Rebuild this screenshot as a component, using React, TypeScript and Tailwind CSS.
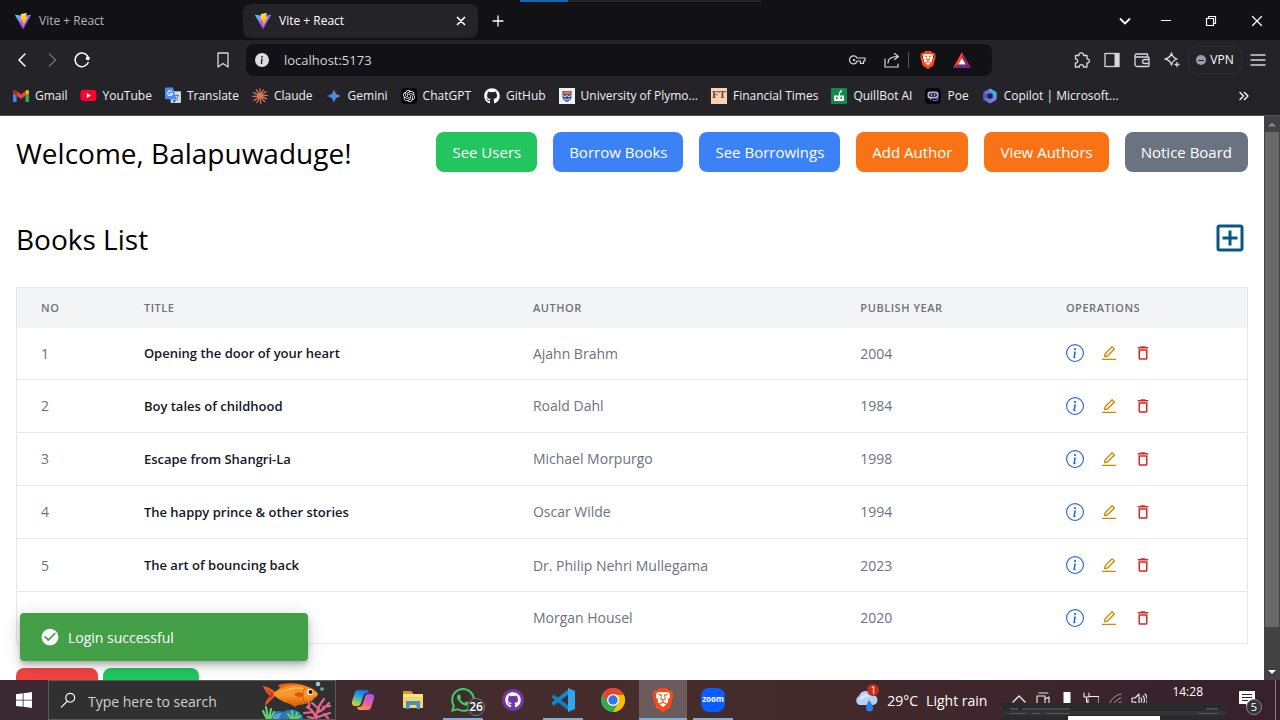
import React from "react";
import { AiOutlineEdit } from "react-icons/ai";
import { BsInfoCircle, BsInfoCircleFill } from "react-icons/bs";
import { FaGithub, FaYoutube } from "react-icons/fa";
import { MdOutlineAddBox, MdOutlineDelete } from "react-icons/md";
import { SiBrave, SiOpenai, SiWhatsapp } from "react-icons/si";

type Kids = { children?: React.ReactNode };

function ViteLogo() {
  return (
    <svg viewBox="0 0 256 257" className="size-4 shrink-0" aria-hidden="true">
      <defs>
        <linearGradient id="viteA" x1="0" x2=".58" y1=".08" y2=".79">
          <stop offset="0" stopColor="#41d1ff" />
          <stop offset="1" stopColor="#bd34fe" />
        </linearGradient>
        <linearGradient id="viteB" x1=".43" x2=".5" y1=".02" y2=".9">
          <stop offset="0" stopColor="#ffea83" />
          <stop offset=".08" stopColor="#ffdd35" />
          <stop offset="1" stopColor="#ffa800" />
        </linearGradient>
      </defs>
      <path fill="url(#viteA)" d="M255.153 37.938L134.897 252.976c-2.483 4.44-8.862 4.466-11.382.048L.875 37.958c-2.746-4.814 1.371-10.646 6.827-9.67l120.385 21.517a6.537 6.537 0 0 0 2.322-.004l117.867-21.483c5.438-.991 9.574 4.796 6.877 9.62Z" />
      <path fill="url(#viteB)" d="M185.432.063L96.44 17.501a3.268 3.268 0 0 0-2.634 3.014l-5.474 92.456a3.268 3.268 0 0 0 3.997 3.378l24.777-5.718c2.318-.535 4.413 1.507 3.936 3.838l-7.361 36.047c-.495 2.426 1.782 4.5 4.151 3.78l15.304-4.649c2.372-.72 4.652 1.36 4.15 3.788l-11.698 56.621c-.732 3.542 3.979 5.473 5.943 2.437l1.313-2.028l72.516-144.72c1.215-2.423-.88-5.186-3.54-4.672l-25.505 4.922c-2.396.462-4.435-1.77-3.759-4.114l16.646-57.705c.677-2.35-1.37-4.583-3.769-4.113Z" />
    </svg>
  );
}

function Line({ d, className = "size-4", width = 1.3, box = "0 0 16 16" }: { d: string; className?: string; width?: number; box?: string }) {
  return (
    <svg viewBox={box} className={className} fill="none" stroke="currentColor" strokeWidth={width} strokeLinecap="round" strokeLinejoin="round" aria-hidden="true">
      <path d={d} />
    </svg>
  );
}

function BraveLogo({ small = false }: { small?: boolean }) {
  return (
    <span className={small ? "relative block size-[18px]" : "relative block size-6"}>
      <span className="absolute inset-x-[22%] top-[18%] bottom-[18%] bg-white" />
      <SiBrave className="relative size-full text-[#fb4a14]" />
    </span>
  );
}

function GmailIcon() {
  return (
    <svg viewBox="0 0 24 18" className="h-3 w-4">
      <path fill="#4285f4" d="M1.6 18h3.8V8.700L0 4.600v11.800C0 17.300.7 18 1.600 18z" />
      <path fill="#34a853" d="M18.600 18h3.800c.9 0 1.600-.7 1.600-1.600V4.600l-5.400 4.100z" />
      <path fill="#fbbc04" d="M18.600 1.600v7.100L24 4.600V2.500c0-2-2.300-3.200-3.900-2z" />
      <path fill="#ea4335" d="M5.400 8.700V1.600L12 6.500l6.600-4.900v7.100L12 13.600z" />
      <path fill="#c5221f" d="M0 2.500v2.100l5.400 4.100V1.600L3.900.5C2.300-.7 0 .5 0 2.500z" />
    </svg>
  );
}

function TranslateIcon() {
  return (
    <svg viewBox="0 0 17 17" className="size-[17px]">
      <rect x="6" y="4" width="11" height="12.500" rx="1" fill="#d5d8dc" />
      <path d="M9 8.500h6M12 7.500v1M14 8.500c-.7 2.500-2.500 4-4 5M10.500 10c.8 1.500 2 2.600 3.800 3.500" stroke="#607d8b" fill="none" />
      <path d="M1 0h7.500l3.500 12.500H1a1 1 0 0 1-1-1V1a1 1 0 0 1 1-1z" fill="#4b8bf5" />
      <path d="M7.200 4.300A2.500 2.500 0 1 0 7.800 6.500H5.400" fill="none" stroke="#fff" strokeWidth="1.100" />
      <path d="M8 13.500h4l-2.500 3z" fill="#2d5fc4" />
    </svg>
  );
}

function ClaudeIcon() {
  return (
    <svg viewBox="0 0 16 16" className="size-4" stroke="#d97757" strokeWidth="1.300" strokeLinecap="round">
      <path d="M8 8V.8M8 8l3.200-6M8 8l6-4.400M8 8l7.200-.6M8 8l6.600 2.800M8 8l4.600 5.600M8 8l.8 7.200M8 8l-3 6.600M8 8l-6 4.600M8 8l-7.200.4M8 8L1.600 4.600M8 8L4.400 1.800" />
    </svg>
  );
}

function GeminiIcon() {
  return (
    <svg viewBox="0 0 16 16" className="size-4">
      <defs>
        <linearGradient id="gem" x1="0" x2="1" y1=".6" y2=".3">
          <stop offset="0" stopColor="#3d8bea" />
          <stop offset=".6" stopColor="#5a86dd" />
          <stop offset="1" stopColor="#a77aa8" />
        </linearGradient>
      </defs>
      <path fill="url(#gem)" d="M8 1C8.900 5.200 10.800 7.100 15 8 10.800 8.900 8.900 10.800 8 15 7.100 10.800 5.200 8.900 1 8 5.200 7.100 7.100 5.200 8 1z" />
    </svg>
  );
}

function PlymouthIcon() {
  return (
    <svg viewBox="0 0 16 16" className="size-4">
      <rect width="16" height="16" fill="#eef0f2" />
      <path fill="#2c4a7c" d="M3.500 3h9v6c0 2.500-2.500 4-4.500 5-2-1-4.500-2.500-4.500-5z" />
      <path fill="#d9483b" d="M4 3.500h8v3H4z" />
      <path fill="#f0c36a" d="M5.500 3.500h1v2h-1zM7.500 3.500h1v2h-1zM9.500 3.500h1v2h-1z" />
      <path stroke="#fff" strokeWidth=".9" fill="none" d="M4 7.500l2 1.200 2-1.200 2 1.200 2-1.200M5 10.500l3 1.500 3-1.500" />
    </svg>
  );
}

function QuillIcon() {
  return (
    <svg viewBox="0 0 16 16" className="size-4">
      <rect width="16" height="16" rx="1" fill="#128a4a" />
      <path fill="#fff" d="M3 7.500h4.800C7.600 4.500 8.800 2.500 11 1.500c.2 1.800-.6 3-2 4V7.500h4v5.500H3z" />
      <path fill="#128a4a" d="M5 9h1.500v2H5zM9.500 9H11v2H9.500z" />
    </svg>
  );
}

function PoeIcon() {
  return (
    <svg viewBox="0 0 16 16" className="size-4">
      <rect width="16" height="16" rx="4" fill="#08080c" />
      <path fill="#b9a8dd" d="M5 3.500h6a2.500 2.500 0 0 1 2.500 2.500v2a2.500 2.500 0 0 1-2.500 2.500H7l-2 1.500v-1.500A2.500 2.500 0 0 1 2.500 8V6A2.500 2.500 0 0 1 5 3.500z" />
      <rect x="4" y="5.300" width="8" height="3.400" rx="1.700" fill="#1c1830" />
      <circle cx="6.500" cy="7" r=".8" fill="#fff" />
      <circle cx="9.500" cy="7" r=".8" fill="#fff" />
      <path d="M7.500 12.500h4l2-2" stroke="#7b57c8" strokeWidth="1.200" fill="none" />
    </svg>
  );
}

function M365Icon() {
  return (
    <svg viewBox="0 0 16 16" className="size-4">
      <defs>
        <linearGradient id="m365" x1="0" x2="1" y1="0" y2="1">
          <stop offset="0" stopColor="#b05fd6" />
          <stop offset=".5" stopColor="#5b6fe6" />
          <stop offset="1" stopColor="#b27bea" />
        </linearGradient>
      </defs>
      <path fill="url(#m365)" d="M8 .5l6.500 3.800v7.400L8 15.500 1.500 11.700V4.300z" />
      <path fill="#37b2e6" d="M8 .5l6.500 3.800v6L11 8V5.500L7 3z" />
      <path fill="#4a5cc4" d="M1.500 5v6.700L5.500 9V5.500z" />
      <path fill="#232328" d="M8 5l2.700 1.500v3L8 11 5.300 9.500v-3z" />
    </svg>
  );
}

const bookmarks: { label: string; icon: React.ReactNode }[] = [
  { label: "Gmail", icon: <GmailIcon /> },
  {
    label: "YouTube",
    icon: (
      <span className="relative flex size-4 items-center justify-center">
        <span className="absolute size-1.5 bg-white" />
        <FaYoutube className="relative size-[17px] shrink-0 text-[#ff0033]" />
      </span>
    ),
  },
  { label: "Translate", icon: <TranslateIcon /> },
  { label: "Claude", icon: <ClaudeIcon /> },
  { label: "Gemini", icon: <GeminiIcon /> },
  {
    label: "ChatGPT",
    icon: (
      <span className="flex size-4 items-center justify-center rounded bg-black">
        <SiOpenai className="size-3 text-white" />
      </span>
    ),
  },
  { label: "GitHub", icon: <FaGithub className="size-4 text-white" /> },
  { label: "University of Plymo...", icon: <PlymouthIcon /> },
  {
    label: "Financial Times",
    icon: <span className="flex size-4 items-center justify-center bg-[#fcd0b1] pb-0.5 font-['Liberation_Serif',serif] text-[11px] leading-none font-bold text-[#5c4a40]">FT</span>,
  },
  { label: "QuillBot AI", icon: <QuillIcon /> },
  { label: "Poe", icon: <PoeIcon /> },
  { label: "Copilot | Microsoft...", icon: <M365Icon /> },
];

function TabStrip() {
  return (
    <div className="relative flex h-10 shrink-0 items-center bg-[#111116] pt-0.5 text-[12px] text-white">
      <div className="absolute top-0 left-[520px] flex h-0.5 w-[241px] bg-[#222227]">
        <span className="w-12 bg-[#0d6ab5]" />
      </div>
      <button className="flex h-8 w-[243px] items-center gap-2 pl-[15px] text-[#b5b5ba]">
        <ViteLogo />
        Vite + React
      </button>
      <div className="flex h-[34px] w-[235px] items-center rounded-lg bg-[#232328] pr-[9px] pl-3">
        <button className="flex grow items-center gap-2">
          <ViteLogo />
          Vite + React
        </button>
        <button aria-label="Close tab">
          <Line d="M4.500 4.500l7 7M11.500 4.500l-7 7" width={1.700} />
        </button>
      </div>
      <button aria-label="New tab" className="ml-3">
        <Line d="M8 3v10M3 8h10" />
      </button>
      <div className="ml-auto flex items-center pr-[15px]">
        <button aria-label="Search tabs" className="mr-[25px]">
          <Line d="M3.500 6l4.500 4.500L12.500 6" width={1.800} />
        </button>
        <button aria-label="Minimize" className="mr-[29px]">
          <Line d="M3.500 7.500h9" width={1.200} />
        </button>
        <button aria-label="Restore" className="mr-[30px]">
          <Line d="M3.500 5.500h7v7h-7zM5.500 5.500v-2h7v7h-2" width={1.200} />
        </button>
        <button aria-label="Close window">
          <Line d="M3.500 3.500l9 9M12.500 3.500l-9 9" />
        </button>
      </div>
    </div>
  );
}

function Toolbar() {
  return (
    <div className="flex h-10 shrink-0 items-center bg-[#232328] text-[#d8d8dd]">
      <div className="flex w-[246px] items-center pr-[15px] pl-3.5">
        <button aria-label="Back" className="mr-3.5">
          <Line d="M11 2L5 8l6 6" width={1.500} className="size-4 text-white" />
        </button>
        <button aria-label="Forward" className="mr-3.5">
          <Line d="M5.500 2l6 6-6 6" width={1.300} className="size-4 text-[#6f6f76]" />
        </button>
        <button aria-label="Reload">
          <svg viewBox="0 0 16 16" className="size-4 text-white" fill="none" stroke="currentColor" strokeWidth="1.500" strokeLinecap="round">
            <path d="M13.500 4A6.800 6.800 0 1 0 14.200 10.500" />
            <circle cx="13.800" cy="6.300" r="1.300" fill="currentColor" />
          </svg>
        </button>
        <button aria-label="Bookmark this tab" className="ml-auto">
          <Line d="M3 1h10v14l-5-3.500L3 15z" />
        </button>
      </div>
      <div className="flex h-8 w-[746px] items-center rounded-lg bg-[#111116] px-[9px]">
        <BsInfoCircleFill className="size-3.5 text-[#dcdce2]" />
        <input aria-label="Address" defaultValue="localhost:5173" className="ml-[15px] h-7 min-w-0 grow bg-transparent text-[13px] text-[#d5d5da] outline-none" />
        <div className="flex items-center">
          <button aria-label="Saved passwords" className="mr-[18px]">
            <Line box="0 0 18 16" className="h-4 w-[18px]" d="M9 6h8v3h-1.500v2.500h-3V9H9.300A4 4 0 1 1 9 6zM5.500 8.200a.6.6 0 1 0 0-.1" width={1.200} />
          </button>
          <button aria-label="Share" className="mr-2">
            <Line d="M1 7v8h13v-3M4 11c0-4 3-6.500 9.500-6.500M10.500 1.500l4 3-4 3" width={1.200} />
          </button>
          <span className="mr-2.5 h-4 w-px bg-[#55555c]" />
          <button aria-label="Brave Shields" className="mr-4">
            <BraveLogo small />
          </button>
          <button aria-label="Rewards" className="mr-3">
            <svg viewBox="0 0 18 16" className="h-4 w-[18px]">
              <path fill="#ff4724" d="M9 0L0 16l5.500-3.500L9 6z" />
              <path fill="#9e1f63" d="M9 0l9 16-5.500-3.500L9 6z" />
              <path fill="#662d91" d="M0 16h18l-5.500-3.500h-7z" />
              <path fill="#fff" d="M9 6l3.700 6.500H5.300z" />
            </svg>
          </button>
        </div>
      </div>
      <div className="ml-auto flex items-center pr-3.5">
        <button aria-label="Extensions" className="mr-3.5">
          <Line d="M1.500 3.500H5C4.500 1.500 6 .8 7.300.8s2.600.9 2.200 2.700H13v3.500c1.500-.3 2.400.7 2.400 2s-1 2.300-2.400 2v4H9.500c.2-1.500-.6-2.300-2-2.300s-2.300.8-2.100 2.300h-4V11c1.600.2 2.300-.8 2.300-2s-.8-2.200-2.200-2z" />
        </button>
        <button aria-label="Sidebar" className="mr-3.5">
          <svg viewBox="0 0 16 16" className="size-4">
            <rect x="1" y="1.500" width="14" height="13" fill="none" stroke="currentColor" strokeWidth="1.300" />
            <path d="M10.500 1.500H15v13h-4.500z" fill="currentColor" />
          </svg>
        </button>
        <button aria-label="Wallet" className="mr-3.5">
          <Line d="M13.500 4.500V2H2.500a1.500 1.500 0 0 0 0 3H14a1 1 0 0 1 1 1v7.500a1 1 0 0 1-1 1H3a2 2 0 0 1-2-2v-9M15 7.500h-4.500a2 2 0 0 0 0 4H15" />
        </button>
        <button aria-label="Assistant" className="mr-2">
          <Line d="M7.500 1C8.200 4.500 10 6 13 7 10 8 8.200 9.500 7.500 13 6.800 9.500 5 8 1 7 5 6 6.800 4.500 7.500 1zM13 10.500v4M11 12.500h4" />
        </button>
        <button className="mr-2 flex h-7 w-[54px] items-center justify-center gap-1 rounded-lg border border-[#2f2f35] text-[12px] text-white">
          <span className="flex size-2.5 items-center justify-center rounded-full bg-[#9a9ab0]">
            <span className="h-px w-1.5 bg-[#232328]" />
          </span>
          VPN
        </button>
        <button aria-label="Menu">
          <Line d="M1 3h14M1 8h14M1 13h14" />
        </button>
      </div>
    </div>
  );
}

function Bookmarks() {
  return (
    <nav className="flex h-9 shrink-0 items-center border-b border-[#55555a] bg-[#232328] pr-7 pb-1 pl-[13px] text-[12px] text-[#f0f0f4]">
      <div className="flex items-center gap-[13px]">
        {bookmarks.map((b) => (
          <a key={b.label} href="#bookmark" className="flex items-center gap-1.5 whitespace-nowrap">
            <span className="flex size-4 shrink-0 items-center justify-center">{b.icon}</span>
            {b.label}
          </a>
        ))}
      </div>
      <button aria-label="More bookmarks" className="ml-auto">
        <Line d="M4 4.500L7.500 8 4 11.500M8.500 4.500L12 8l-3.500 3.500" width={1.500} />
      </button>
    </nav>
  );
}

const actions = [
  { label: "See Users", color: "bg-[#22c55e]" },
  { label: "Borrow Books", color: "bg-[#3b82f6]" },
  { label: "See Borrowings", color: "bg-[#3b82f6]" },
  { label: "Add Author", color: "bg-[#f97316]" },
  { label: "View Authors", color: "bg-[#f97316]" },
  { label: "Notice Board", color: "bg-[#6b7280]" },
];

const books = [
  { no: 1, title: "Opening the door of your heart", author: "Ajahn Brahm", year: 2004 },
  { no: 2, title: "Boy tales of childhood", author: "Roald Dahl", year: 1984 },
  { no: 3, title: "Escape from Shangri-La", author: "Michael Morpurgo", year: 1998 },
  { no: 4, title: "The happy prince & other stories", author: "Oscar Wilde", year: 1994 },
  { no: 5, title: "The art of bouncing back", author: "Dr. Philip Nehri Mullegama", year: 2023 },
  { no: "", title: "", author: "Morgan Housel", year: 2020 },
];

function Th({ children }: Kids) {
  return <th className="h-10 px-6 text-left text-[11px] font-semibold tracking-wider uppercase">{children}</th>;
}

function BooksTable() {
  return (
    <table className="h-[357px] w-full table-fixed border-collapse border border-[#e5e7eb] text-[14px] text-[#6b7280]">
      <colgroup>
        <col className="w-[8.4%]" />
        <col className="w-[31.6%]" />
        <col className="w-[26.6%]" />
        <col className="w-[16.7%]" />
        <col className="w-[16.7%]" />
      </colgroup>
      <thead className="bg-[#f3f4f6]">
        <tr>
          <Th>No</Th>
          <Th>Title</Th>
          <Th>Author</Th>
          <Th>Publish Year</Th>
          <Th>Operations</Th>
        </tr>
      </thead>
      <tbody>
        {books.map((b) => (
          <tr key={b.author} className="border-b border-[#e5e7eb]">
            <td className="px-6">{b.no}</td>
            <td className="px-6 pt-0.5 text-[13px] font-semibold text-[#111827]">{b.title}</td>
            <td className="px-6">{b.author}</td>
            <td className="px-6">{b.year}</td>
            <td className="px-6">
              <div className="flex items-center gap-4 text-[18px]">
                <a href="#details" aria-label="Details" className="text-[#2563eb]">
                  <BsInfoCircle />
                </a>
                <a href="#edit" aria-label="Edit" className="text-[#ca8a04]">
                  <AiOutlineEdit />
                </a>
                <a href="#delete" aria-label="Delete" className="text-[#dc2626]">
                  <MdOutlineDelete />
                </a>
              </div>
            </td>
          </tr>
        ))}
      </tbody>
    </table>
  );
}

function ScrollBar() {
  return (
    <div className="flex w-4 shrink-0 flex-col items-center bg-[#424242]" aria-hidden="true">
      <svg viewBox="0 0 16 16" className="size-4 shrink-0">
        <path d="M4 10.500h8L8 6.500z" fill="#8a8a8a" />
      </svg>
      <div className="w-3.5 grow bg-[#686868]" />
      <div className="h-[37px] shrink-0" />
      <svg viewBox="0 0 16 16" className="size-4 shrink-0">
        <path d="M4 6h8l-4 4z" fill="#fff" />
      </svg>
    </div>
  );
}

function Toast() {
  return (
    <div role="status" className="absolute bottom-[19px] left-5 flex h-12 w-72 items-center gap-2 rounded bg-[#43a047] px-5 text-[14px] text-white shadow-[0_3px_5px_-1px_rgba(0,0,0,0.2),0_6px_10px_rgba(0,0,0,0.14),0_1px_18px_rgba(0,0,0,0.12)]">
      <svg viewBox="0 0 24 24" className="size-5" fill="currentColor" aria-hidden="true">
        <path d="M12 2C6.500 2 2 6.500 2 12s4.500 10 10 10 10-4.500 10-10S17.500 2 12 2zm-2 15l-5-5 1.400-1.400L10 14.200l7.600-7.600L19 8l-9 9z" />
      </svg>
      Login successful
    </div>
  );
}

function BooksPage() {
  return (
    <main className="relative flex min-h-0 grow bg-white">
      <div className="min-w-0 grow overflow-hidden px-4 pt-4">
        <header className="flex items-center justify-between">
          <h1 className="pt-0.5 text-[28px] leading-9 text-black">Welcome, Balapuwaduge!</h1>
          <div className="flex gap-4">
            {actions.map((a) => (
              <button key={a.label} className={`h-10 rounded-lg px-4 text-[15px] whitespace-nowrap text-white ${a.color}`}>
                {a.label}
              </button>
            ))}
          </div>
        </header>
        <div className="mt-12 flex h-[35px] items-center justify-between">
          <h2 className="pt-0.5 text-[28px] leading-9 text-black">Books List</h2>
          <button aria-label="Add book">
            <MdOutlineAddBox className="size-9 text-[#075985]" />
          </button>
        </div>
        <div className="mt-8">
          <BooksTable />
        </div>
        <div className="mt-6 flex gap-[5px]">
          <button aria-label="Log out" className="h-10 w-[82px] rounded-lg bg-[#ef4444]" />
          <button aria-label="Profile" className="h-10 w-24 rounded-lg bg-[#22c55e]" />
        </div>
      </div>
      <ScrollBar />
      <Toast />
    </main>
  );
}

function Fish() {
  return (
    <svg viewBox="0 0 72 38" className="mr-0.5 h-[38px] w-[72px] shrink-0 self-end" aria-hidden="true">
      <defs>
        <linearGradient id="fishBody" x1="0" x2="0" y1="0" y2="1">
          <stop offset="0" stopColor="#f68a17" />
          <stop offset=".5" stopColor="#fb9a2a" />
          <stop offset="1" stopColor="#d95f0c" />
        </linearGradient>
      </defs>
      <path fill="#2a78b8" d="M8 38c2-6 8-10 14-7 5-3 12-3 16 0 3 2 4 5 4 7z" />
      <path fill="#4ea6dc" d="M12 36c2-3 6-5 9-3-2 1-3 3-3 5h-6z" />
      <g stroke="#f0648c" strokeWidth="2.200" strokeLinecap="round" fill="none">
        <path d="M55 38c-2-6-3-9-9-12M52 31l-9 1M55 38c0-8 3-14 8-20M58 28l-7-6M57 31c5-2 8-5 11-9M57 36c5-2 8-3 12-4M63 33l4 4M48 27v-5M62 26l7-1M47 36l5 1" />
      </g>
      <g stroke="#5fcf6f" strokeWidth="2.200" strokeLinecap="round" fill="none">
        <path d="M6 38l-4-8M7 38l-2-12M8 38l2-10M9 38l4-7M31 38l-4-5M32 38l-1-8M34 38l2-6M35 38l4-3" />
      </g>
      <path fill="#ec5a1c" d="M17 4c10-3 24-2 30 2l-6 3-20 1zM24 20l10 6 6-4z" />
      <path fill="#ee5a20" d="M2 5c6 1 11 4 14 8-4 4-8 8-12 12 0-4 2-7 5-10C6 12 3 9 2 5z" />
      <path fill="#b93a0d" d="M5 8l8 5-6 7 3-7z" />
      <path fill="url(#fishBody)" d="M12 13C18 6 28 3 39 4c8 1 15 4 18 9-3 6-10 10-19 11-10 0-20-4-26-11z" />
      <path fill="#ffc05a" d="M18 12c8-6 19-7 28-4-9-1-19 0-28 4z" />
      <path fill="#e0530f" d="M33 13c5-3 8-2 10 1-3 3-7 3-10-1z" />
      <path d="M44 7c-3 4-3 10 0 15" stroke="#cd590e" fill="none" />
      <circle cx="49" cy="11" r="2.900" fill="#fff" />
      <circle cx="49.500" cy="11" r="2" fill="#151515" />
      <path d="M52 17c2 0 4-1 5-3" stroke="#9a3b06" fill="none" />
      <circle cx="57" cy="3" r="2.300" fill="#9cc8dd" />
      <circle cx="61" cy="8" r="1.800" fill="#6fa9c9" />
    </svg>
  );
}

function CopilotIcon() {
  return (
    <svg viewBox="0 0 24 24" className="size-6">
      <defs>
        <linearGradient id="cpL" x1=".6" x2=".2" y1="0" y2="1">
          <stop offset="0" stopColor="#1a6fe0" />
          <stop offset=".4" stopColor="#27a5e0" />
          <stop offset=".75" stopColor="#8ccc55" />
          <stop offset="1" stopColor="#f3c72b" />
        </linearGradient>
        <linearGradient id="cpR" x1=".7" x2=".2" y1="0" y2="1">
          <stop offset="0" stopColor="#a55af0" />
          <stop offset=".5" stopColor="#ec5f9c" />
          <stop offset="1" stopColor="#f79a4b" />
        </linearGradient>
      </defs>
      <path fill="url(#cpL)" d="M7 2h8c2 0 2.500 1 3 3h-2c-2 0-3 1-3.500 2.500L10 15c-.5 2-1.500 3-4 3H4c-2.500 0-3.500-2-3-4.500L4 4.500C4.500 3 5.500 2 7 2z" />
      <path fill="url(#cpR)" d="M17 22H9c-2 0-2.500-1-3-3h2c2 0 3-1 3.500-2.500L14 9c.5-2 1.500-3 4-3h2c2.500 0 3.500 2 3 4.500l-3 9C19.500 21 18.500 22 17 22z" />
    </svg>
  );
}

function FolderIcon() {
  return (
    <svg viewBox="0 0 22 20" className="h-5 w-[22px]">
      <path fill="#d49a1c" d="M1 1h8l2 2v4H1z" />
      <path fill="#f8d568" d="M1 4h20v14H1z" />
      <path fill="#fbe08a" d="M1 4h20v3H1z" />
      <path fill="#3f93c9" d="M4 11h14v8h-3.500v-4h-7v4H4z" />
    </svg>
  );
}

function CodeIcon() {
  return (
    <svg viewBox="0 0 24 24" className="size-6">
      <path fill="#0d7fc6" d="M1 8l2-1.600L18 18v5L1 9.800z" />
      <path fill="#1487cf" d="M1 16l2 1.600L18 6V1L1 14.200z" />
      <path fill="#2ea7ec" d="M17 0l7 3v18l-7 3z" />
    </svg>
  );
}

function ChromeIcon() {
  return (
    <svg viewBox="0 0 24 24" className="size-6">
      <circle cx="12" cy="12" r="12" fill="#34a853" />
      <path fill="#ea4335" d="M12 12L1.600 6A12 12 0 0 1 22.400 6z" />
      <path fill="#fbbc04" d="M12 24l5.200-9L12 6.500h10.700A12 12 0 0 1 12 24z" />
      <path fill="#ea4335" d="M1.600 6L7 15l5-8.500h10.600A12 12 0 0 0 1.600 6z" />
      <circle cx="12" cy="12" r="6" fill="#fff" />
      <circle cx="12" cy="12" r="4.700" fill="#2f78ea" />
    </svg>
  );
}

function TaskApp({ label, open, active, children }: Kids & { label: string; open?: boolean; active?: boolean }) {
  return (
    <button aria-label={label} className={`relative flex h-full w-12 items-center justify-center ${active ? "bg-[#6b5b5d]" : ""}`}>
      {children}
      {open && <span className={`absolute bottom-0 h-0.5 bg-[#76b1e0] ${active ? "w-12" : "w-10"}`} />}
    </button>
  );
}

function Preview() {
  return (
    <div className="absolute right-[54px] bottom-0 flex h-[17px] w-56 flex-col bg-[#2a2a2c] pt-1" aria-hidden="true">
      <div className="flex h-1 items-center gap-1 px-2">
        <span className="h-0.5 w-2 bg-[#4c4c50]" />
        <span className="h-0.5 w-12 bg-[#48484c]" />
        <span className="ml-auto h-0.5 w-3 bg-[#4c4c50]" />
      </div>
      <div className="flex h-1 items-center gap-1.5 bg-[#333336] px-2">
        <span className="h-px w-4 bg-[#55555a]" />
        <span className="h-px w-2 bg-[#55555a]" />
        <span className="h-px w-6 bg-[#55555a]" />
        <span className="ml-auto h-px w-5 bg-[#55555a]" />
      </div>
      <div className="mx-auto mt-auto h-1 w-[92px] bg-white" />
    </div>
  );
}

function Taskbar() {
  return (
    <footer className="relative flex h-10 shrink-0 items-center bg-linear-to-r from-[#3a2833] via-[#472d2b] to-[#36202c] text-white">
      <button aria-label="Start" className="flex w-12 shrink-0 justify-center">
        <svg viewBox="0 0 16 16" className="size-4" fill="#fff">
          <path d="M0 2.200L6.700 1.300v6.400H0zM7.500 1.200L16 0v7.700H7.500zM0 8.400h6.700v6.400L0 13.900zM7.500 8.400H16V16l-8.500-1.200z" />
        </svg>
      </button>
      <div className="flex h-full w-72 shrink-0 items-center border border-[#5a5a5a] bg-[#303030] pl-[11px]">
        <Line box="0 0 18 18" d="M16.500 6.500a5 5 0 1 1-10 0 5 5 0 0 1 10 0zM8 10.500L1.500 17" className="size-4 shrink-0" />
        <input aria-label="Search" placeholder="Type here to search" className="ml-3 h-9 min-w-0 grow bg-transparent pt-0.5 text-[14px] outline-none placeholder:text-[#d0d0d0]" />
        <Fish />
      </div>
      <div className="ml-[3px] flex h-full gap-0.5">
        <TaskApp label="Copilot"><CopilotIcon /></TaskApp>
        <TaskApp label="File Explorer"><FolderIcon /></TaskApp>
        <TaskApp label="WhatsApp, 26 unread" open>
          <SiWhatsapp className="size-6 text-[#3ccf62]" />
          <span className="absolute right-[2px] bottom-1 flex size-[18px] items-center justify-center rounded-full border border-[#7a7a7a] bg-[#333] text-[12px] font-semibold">26</span>
        </TaskApp>
        <TaskApp label="GitHub Desktop">
          <span className="flex size-[22px] items-center justify-center rounded-full bg-[#7536a5]">
            <FaGithub className="size-4 text-white" />
          </span>
        </TaskApp>
        <TaskApp label="Visual Studio Code" open><CodeIcon /></TaskApp>
        <TaskApp label="Chrome"><ChromeIcon /></TaskApp>
        <TaskApp label="Brave" open active><BraveLogo /></TaskApp>
        <TaskApp label="Zoom" open>
          <span className="flex size-6 items-center justify-center rounded-lg bg-[#0b5cff] pb-0.5 text-[8px] leading-none font-bold">zoom</span>
        </TaskApp>
      </div>
      <div className="ml-auto flex h-full items-center">
        <button className="mr-6 flex items-center gap-2 text-[14px]">
          <span className="relative block">
            <svg viewBox="0 0 26 24" className="h-6 w-[26px]">
              <path fill="#b7d0f3" d="M6 17a5 5 0 0 1 0-9 7 7 0 0 1 13-1 5 5 0 0 1 1 10z" />
              <path fill="#dce8fa" d="M7 12a6 6 0 0 1 11-3c-4-1-7 0-9 3z" />
              <path fill="#2a7de1" d="M16 12c3 4 4 6 4 8a3.500 3.500 0 0 1-7 0c0-2 1-4 3-8z" />
            </svg>
            <span className="absolute -top-1 right-0 flex size-3 items-center justify-center rounded-full bg-[#c42b1c] text-[10px]">1</span>
          </span>
          <span>29°C</span>
          <span>Light rain</span>
        </button>
        <div className="mr-[25px] flex items-start gap-2 text-[#eee]">
          <Line d="M2 10l6-6 6 6" />
          <Line d="M4 1h9M2 4h8v10H2zM10 7l4-2v8l-4-2" width={1.100} />
          <svg viewBox="0 0 16 16" className="size-4"><path d="M4.500 0h7v11h-7z" fill="#fff" /></svg>
          <Line d="M6 4.500h10v7H5v-4M1 1v4h5V1M3.500 5v5H5" width={1.100} />
          <Line d="M2 14C3 8 8 3 14 2M6 14c1-4 4-7 8-8M10 14c0-2 2-4 4-4" className="size-4 text-[#a99]" width={1} />
          <Line d="M1 6h3l4-4v12L4 10H1zM10 6c1 1 1 3 0 4M12 4c2 2 2 6 0 8M14 2c3 3 3 9 0 12" width={1.100} />
        </div>
        <span className="mr-9 mb-4 text-[12px] leading-4">14:28</span>
        <button aria-label="5 notifications" className="relative mr-[25px] mb-0.5">
          <svg viewBox="0 0 16 16" className="size-4">
            <path fill="#fff" d="M0 0h16v13H9l-2 3v-3H0z" />
            <path stroke="#36202c" d="M3 3.500h10M3 6.500h10M3 9.500h6" />
          </svg>
          <span className="absolute top-2 left-[7px] flex size-4 items-center justify-center rounded-full border border-[#888] bg-[#333] text-[11px]">5</span>
        </button>
      </div>
      <Preview />
      <span className="absolute right-[4px] h-full w-px bg-[#8c7c82]" />
    </footer>
  );
}

export default function App() {
  return (
    <div className="flex h-screen flex-col overflow-hidden font-['Open_Sans','Noto_Sans',sans-serif]">
      <TabStrip />
      <Toolbar />
      <Bookmarks />
      <BooksPage />
      <Taskbar />
    </div>
  );
}
